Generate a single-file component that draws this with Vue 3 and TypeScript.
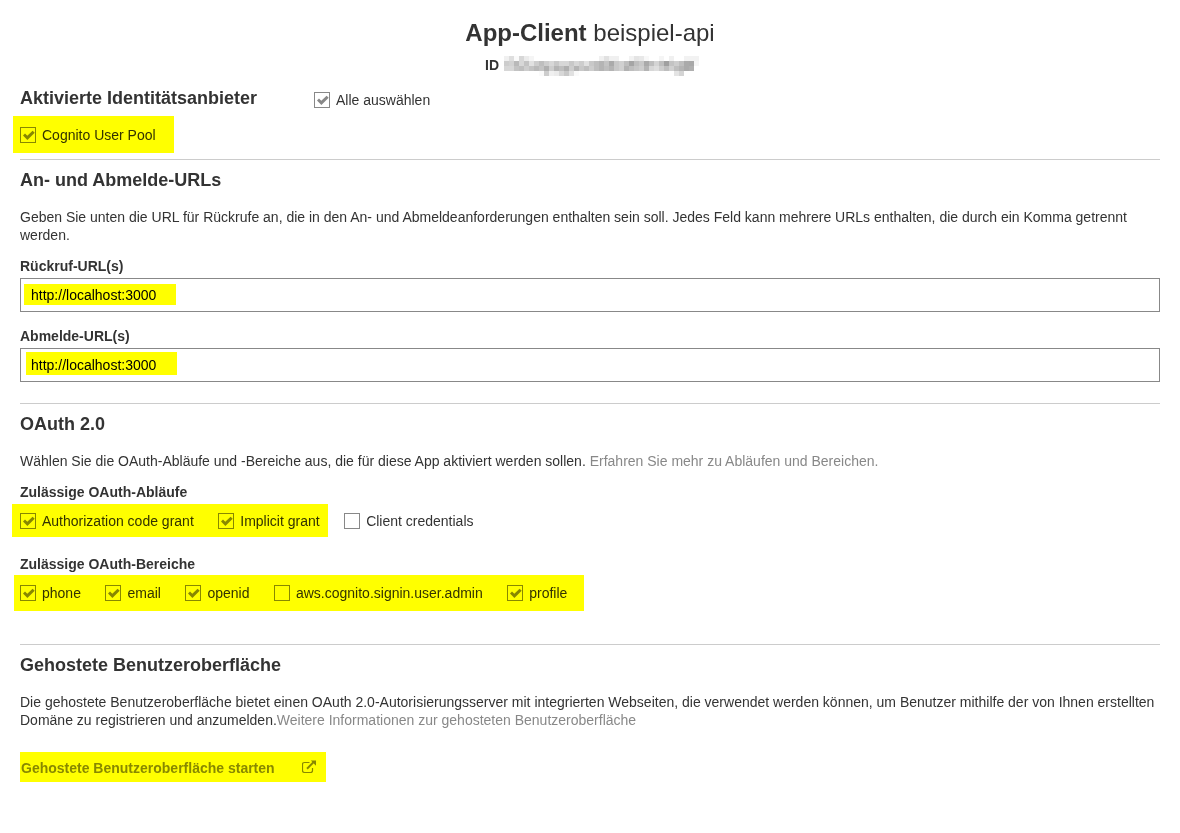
<script setup lang="ts">
interface Option {
  label: string
  checked: boolean
}

const flows: Option[] = [
  { label: 'Authorization code grant', checked: true },
  { label: 'Implicit grant', checked: true },
  { label: 'Client credentials', checked: false },
]

const scopes: Option[] = [
  { label: 'phone', checked: true },
  { label: 'email', checked: true },
  { label: 'openid', checked: true },
  { label: 'aws.cognito.signin.user.admin', checked: false },
  { label: 'profile', checked: true },
]

const callbackUrl = 'http://localhost:3000'
const signOutUrl = 'http://localhost:3000'

const checkPath = 'M3 8.400 5 6.400 7.300 8.700 12.600 3.700 14.700 5.700 7.400 12.900Z'

// Grey levels of the mosaic that hides the client ID, one list per row of cells.
const mosaic: number[][] = [
  [240, 222, 250, 215, 235, 245, 255, 255, 255, 255, 255, 255, 255, 255, 255, 255, 255, 255, 255, 240, 225, 240, 240, 255, 255, 242, 228, 232, 248, 255, 255, 245, 255, 240, 255, 255, 242, 242, 242],
  [205, 210, 185, 215, 195, 225, 205, 190, 205, 215, 200, 215, 215, 200, 215, 205, 225, 200, 190, 180, 195, 170, 200, 208, 190, 165, 190, 200, 170, 190, 212, 190, 160, 195, 205, 190, 170, 168, 245],
  [215, 215, 195, 190, 205, 195, 185, 195, 175, 205, 180, 190, 175, 205, 180, 200, 190, 205, 190, 180, 190, 180, 200, 208, 178, 190, 198, 205, 180, 215, 222, 205, 190, 208, 190, 180, 170, 175, 255],
  [255, 255, 255, 255, 255, 255, 255, 250, 205, 240, 235, 215, 200, 225, 250, 255, 255, 255, 255, 255, 255, 255, 255, 255, 255, 255, 255, 255, 255, 255, 255, 255, 255, 255, 228, 212, 255, 255, 255],
]
</script>

<template>
  <main class="page">
    <header class="head">
      <h1><strong>App-Client</strong> beispiel-api</h1>
      <div class="client-id">
        <b>ID</b>
        <div class="mosaic">
          <div v-for="(row, r) in mosaic" :key="r" class="mosaic-row">
            <i v-for="(level, c) in row" :key="c" :style="{ background: `rgb(${level},${level},${level})` }"></i>
          </div>
        </div>
      </div>
    </header>

    <section class="providers">
      <div class="provider-head">
        <h2>Aktivierte Identitätsanbieter</h2>
        <label class="option select-all">
          <span class="box"><svg viewBox="0 0 16 16"><path :d="checkPath" /></svg></span>
          Alle auswählen
        </label>
      </div>
      <div class="options">
        <label class="option">
          <span class="box"><svg viewBox="0 0 16 16"><path :d="checkPath" /></svg></span>
          Cognito User Pool
        </label>
        <span class="marker marker-pool"></span>
      </div>
    </section>

    <section class="urls">
      <h2>An- und Abmelde-URLs</h2>
      <p>Geben Sie unten die URL für Rückrufe an, die in den An- und Abmeldeanforderungen enthalten sein soll. Jedes Feld kann mehrere URLs enthalten, die durch ein Komma getrennt werden.</p>
      <h3>Rückruf-URL(s)</h3>
      <div class="field">{{ callbackUrl }}<span class="marker marker-callback"></span></div>
      <h3>Abmelde-URL(s)</h3>
      <div class="field">{{ signOutUrl }}<span class="marker marker-signout"></span></div>
    </section>

    <section class="oauth">
      <h2>OAuth 2.0</h2>
      <p>Wählen Sie die OAuth-Abläufe und -Bereiche aus, die für diese App aktiviert werden sollen. <a>Erfahren Sie mehr zu Abläufen und Bereichen.</a></p>
      <h3>Zulässige OAuth-Abläufe</h3>
      <div class="options flows">
        <label v-for="item in flows" :key="item.label" class="option">
          <span class="box"><svg v-if="item.checked" viewBox="0 0 16 16"><path :d="checkPath" /></svg></span>
          {{ item.label }}
        </label>
        <span class="marker marker-flows"></span>
      </div>
      <h3>Zulässige OAuth-Bereiche</h3>
      <div class="options">
        <label v-for="item in scopes" :key="item.label" class="option">
          <span class="box"><svg v-if="item.checked" viewBox="0 0 16 16"><path :d="checkPath" /></svg></span>
          {{ item.label }}
        </label>
        <span class="marker marker-scopes"></span>
      </div>
    </section>

    <section class="hosted">
      <h2>Gehostete Benutzeroberfläche</h2>
      <p>Die gehostete Benutzeroberfläche bietet einen OAuth 2.0-Autorisierungsserver mit integrierten Webseiten, die verwendet werden können, um Benutzer mithilfe der von Ihnen erstellten Domäne zu registrieren und anzumelden.<a>Weitere Informationen zur gehosteten Benutzeroberfläche</a></p>
      <a class="launch">
        Gehostete Benutzeroberfläche starten
        <svg class="external" viewBox="0 0 14 14">
          <path d="M7.5 2.5H2.5Q.5 2.5 .5 4.5V10.500Q.5 12.500 2.500 12.500H8.500Q10.500 12.500 10.500 10.500V8" fill="none" stroke="currentColor" stroke-width="1.200" />
          <path d="M5 8.700 11.600 2.100" fill="none" stroke="currentColor" stroke-width="2" />
          <path d="M8.800 0.500H14V5.700Z" fill="currentColor" />
        </svg>
        <span class="marker marker-launch"></span>
      </a>
    </section>
  </main>
</template>

<style>
body {
  background: #fff;
}
</style>

<style scoped>
.page {
  box-sizing: border-box;
  height: 833px;
  padding: 18px 20px 0;
  overflow: hidden;
  background: #fff;
  color: #333;
  font: 14px/18px "Liberation Sans", Arial, sans-serif;
}

h1,
h2,
h3,
p {
  margin: 0;
}

.head {
  height: 68px;
}

h1 {
  font-size: 24px;
  font-weight: 400;
  line-height: 30px;
  text-align: center;
}

.client-id {
  display: flex;
  margin: 8px 0 0 465px;
}

.client-id b {
  width: 19px;
}

.mosaic-row {
  display: flex;
}

.mosaic-row i {
  width: 5px;
  height: 5px;
}

h2 {
  font-size: 18px;
  line-height: 24px;
}

h3 {
  font-size: 14px;
  line-height: 18px;
}

.providers {
  height: 73px;
}

.provider-head {
  display: flex;
}

.provider-head h2 {
  width: 294px;
}

.select-all {
  margin-top: 5px;
}

.providers .options {
  margin-top: 16px;
}

.urls,
.oauth,
.hosted {
  box-sizing: border-box;
  border-top: 1px solid #ccc;
  padding-top: 8px;
}

.urls {
  height: 244px;
}

.oauth {
  height: 241px;
}

.urls p,
.oauth p,
.hosted p {
  margin-top: 16px;
}

.urls h3,
.oauth h3 {
  margin-top: 13px;
}

.field {
  position: relative;
  box-sizing: border-box;
  height: 34px;
  margin-top: 3px;
  padding: 0 10px;
  border: 1px solid #888;
  color: #000;
  line-height: 32px;
}

.urls .field + h3 {
  margin-top: 15px;
}

.options {
  position: relative;
  display: flex;
  gap: 24.5px;
  height: 18px;
  margin-top: 11px;
}

.oauth .flows + h3 {
  margin-top: 25px;
}

.option {
  display: flex;
  align-items: center;
  gap: 6px;
  height: 18px;
  white-space: nowrap;
}

.box {
  box-sizing: border-box;
  width: 16px;
  height: 16px;
  border: 1px solid #888;
}

.box svg {
  display: block;
  width: 16px;
  height: 16px;
  margin: -1px;
  fill: #888;
}

a {
  color: #888;
}

.launch {
  position: relative;
  display: flex;
  width: 306px;
  height: 30px;
  box-sizing: border-box;
  margin-top: 23px;
  padding-left: 1px;
  font-weight: 700;
  line-height: 32px;
}

.external {
  width: 14px;
  height: 14px;
  margin: 8px 0 0 27px;
}

/* Highlighter strokes laid over the content */
.marker {
  position: absolute;
  background: #ff0;
  mix-blend-mode: multiply;
}

.marker-pool {
  left: -7px;
  top: -10px;
  width: 161px;
  height: 37px;
}

.marker-callback {
  left: 3px;
  top: 5px;
  width: 152px;
  height: 21px;
}

.marker-signout {
  left: 5px;
  top: 3px;
  width: 151px;
  height: 23px;
}

.marker-flows {
  left: -8px;
  top: -8px;
  width: 316px;
  height: 33px;
}

.marker-scopes {
  left: -6px;
  top: -9px;
  width: 570px;
  height: 36px;
}

.marker-launch {
  inset: 0;
}
</style>
